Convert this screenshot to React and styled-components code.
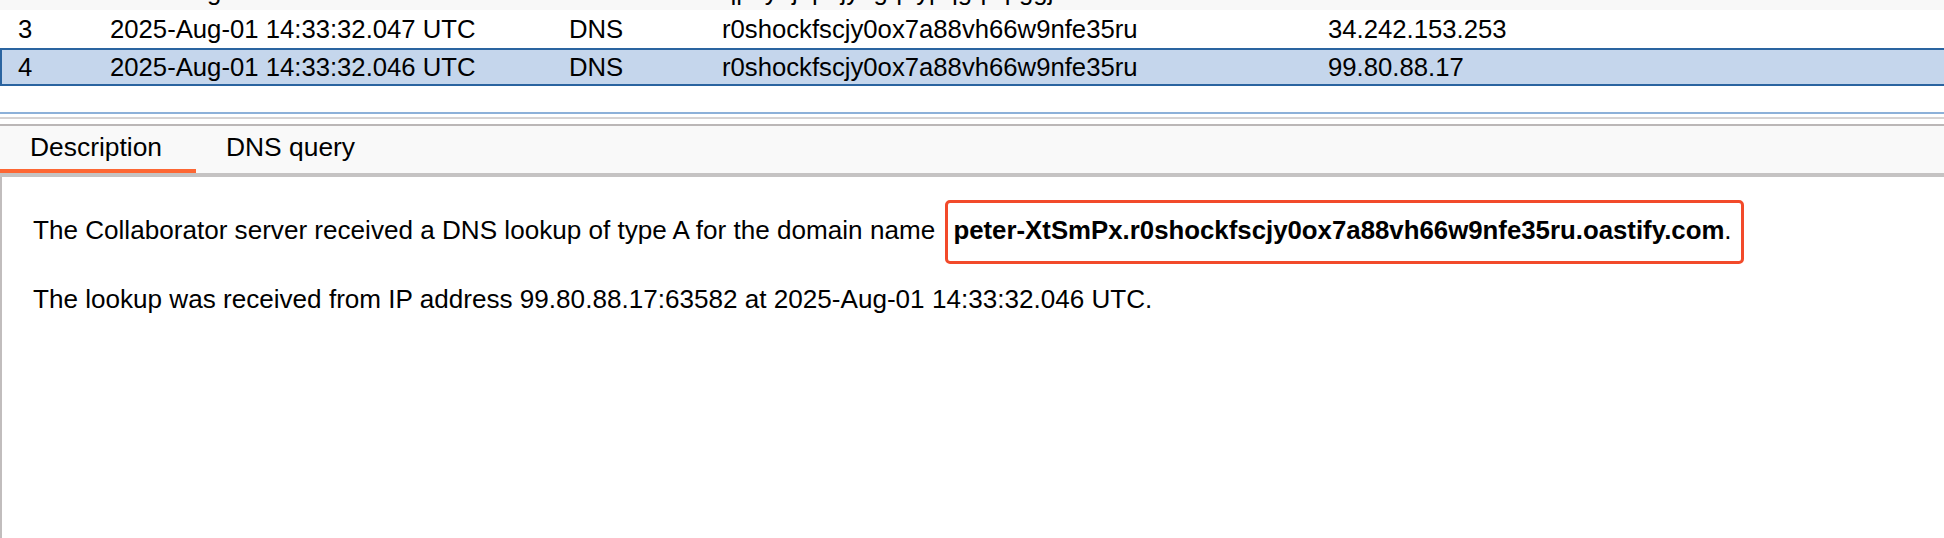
import React from "react";
import styled, { createGlobalStyle } from "styled-components";

const GlobalStyle = createGlobalStyle`
  html, body {
    margin: 0;
    padding: 0;
    background: #ffffff;
  }
  body {
    font-family: "Liberation Sans", Arial, Helvetica, sans-serif;
    color: #000;
    overflow: hidden;
  }
`;

const rows = [
  {
    id: 2,
    time: "2025-Aug-01 14:33:32.047 UTC",
    type: "DNS",
    payload: "qp8yajdpnjy5gq0ypqgqwpggj",
    ip: "34.242.153.253",
  },
  {
    id: 3,
    time: "2025-Aug-01 14:33:32.047 UTC",
    type: "DNS",
    payload: "r0shockfscjy0ox7a88vh66w9nfe35ru",
    ip: "34.242.153.253",
  },
  {
    id: 4,
    time: "2025-Aug-01 14:33:32.046 UTC",
    type: "DNS",
    payload: "r0shockfscjy0ox7a88vh66w9nfe35ru",
    ip: "99.80.88.17",
    selected: true,
  },
];

const App = () => {
  return (
    <>
      <GlobalStyle />
      <Page>
        <TableView>
          {rows.map((r, i) => (
            <Row
              key={r.id}
              $selected={r.selected}
              $striped={r.id % 2 === 0 && !r.selected}
              $first={i === 0}
            >
              <Cell>{r.id}</Cell>
              <Cell>{r.time}</Cell>
              <Cell>{r.type}</Cell>
              <Cell>{r.payload}</Cell>
              <Cell>{r.ip}</Cell>
            </Row>
          ))}
        </TableView>

        <Splitter />

        <TabBar>
          <Tab $active>Description</Tab>
          <Tab>DNS query</Tab>
        </TabBar>

        <Content>
          <Line>
            The Collaborator server received a DNS lookup of type A for the
            domain name{" "}
            <Mark>
              <b>peter-XtSmPx.r0shockfscjy0ox7a88vh66w9nfe35ru.oastify.com</b>.
            </Mark>
          </Line>
          <Line>
            The lookup was received from IP address 99.80.88.17:63582 at
            2025-Aug-01 14:33:32.046 UTC.
          </Line>
        </Content>
      </Page>
    </>
  );
};

const Page = styled.div`
  display: flex;
  flex-direction: column;
  width: 1944px;
  height: 538px;
  overflow: hidden;
`;

const TableView = styled.div`
  height: 112px;
  overflow: hidden;
  background: #ffffff;
  flex-shrink: 0;
  font-size: 25.7px;
`;

const Row = styled.div`
  display: grid;
  grid-template-columns: 94px 459px 153px 606px 1fr;
  height: 38px;
  box-sizing: border-box;
  margin-top: ${(p) => (p.$first ? "-28px" : "0")};
  background: ${(p) =>
    p.$selected ? "#c5d6ec" : p.$striped ? "#f8f8f8" : "#ffffff"};
  border-top: 2px solid ${(p) => (p.$selected ? "#2a64a0" : "transparent")};
  border-bottom: 2px solid ${(p) => (p.$selected ? "#2a64a0" : "transparent")};
  border-left: 2px solid ${(p) => (p.$selected ? "#2a64a0" : "transparent")};
`;

const Cell = styled.div`
  padding-left: 14px;
  line-height: 34px;
  white-space: nowrap;
  overflow: hidden;
  &:first-child {
    padding-left: 16px;
  }
`;

const Splitter = styled.div`
  height: 14px;
  flex-shrink: 0;
  box-sizing: border-box;
  border-top: 2px solid #8db1d9;
  border-bottom: 2px solid #bbb7b7;
  background: linear-gradient(
    to bottom,
    #ffffff 0,
    #ffffff 3px,
    #d6d3d3 3px,
    #d6d3d3 5px,
    #ffffff 5px
  );
`;

const TabBar = styled.div`
  display: flex;
  height: 51px;
  flex-shrink: 0;
  box-sizing: border-box;
  background: #f9f9f9;
  border-bottom: 4px solid #c5c3c3;
  font-size: 26.4px;
`;

const Tab = styled.div`
  box-sizing: border-box;
  width: 196px;
  padding-left: 30px;
  height: 47px;
  line-height: 43px;
  white-space: nowrap;
  border-bottom: 4px solid ${(p) => (p.$active ? "#fd6734" : "transparent")};
`;

const Content = styled.div`
  flex: 1;
  background: #ffffff;
  border-left: 2px solid #c1bdbd;
  padding: 38px 0 0 31px;
  font-size: 26.1px;
`;

const Line = styled.p`
  margin: 0 0 39px;
  line-height: 30px;
  white-space: nowrap;
`;

const Mark = styled.span`
  position: relative;
  margin-left: 5px;
  padding-left: 6px;

  b {
    font-weight: 700;
    font-size: 25.8px;
  }

  &::after {
    content: "";
    position: absolute;
    left: -2px;
    right: -12px;
    top: -15px;
    bottom: -19px;
    border: 3px solid #f24a2a;
    border-radius: 5px;
    pointer-events: none;
  }
`;

export default App;
